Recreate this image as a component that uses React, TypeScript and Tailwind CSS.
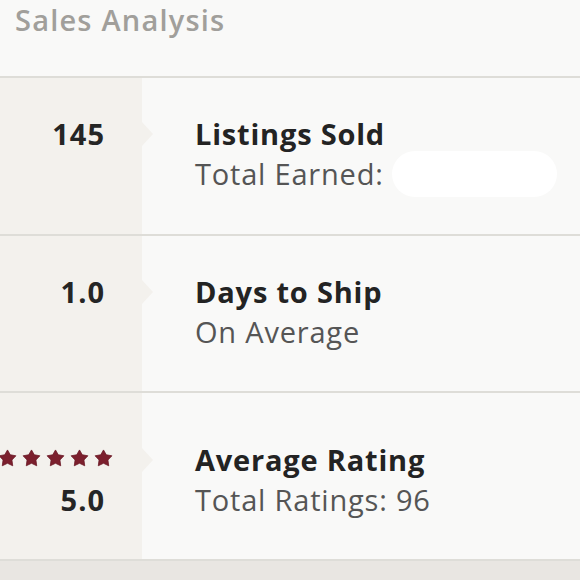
import React from "react";

const Star = () => (
  <svg width="19" height="19" viewBox="0 0 24 24" className="shrink-0">
    <path
      d="M12 1.2L15.5 7.3L22.6 8.6L17.6 13.9L18.6 21.2L12 18L5.4 21.2L6.4 13.9L1.4 8.6L8.5 7.3Z"
      fill="#7b1f2d"
      stroke="#6a1a26"
      strokeWidth="1"
      strokeLinejoin="round"
    />
  </svg>
);

type Row = {
  h: string;
  off: string;
  left: React.ReactNode;
  leftBottom?: React.ReactNode;
  title: string;
  sub: React.ReactNode;
};

export default function App() {
  const rows: Row[] = [
    {
      h: "h-[158px]",
      off: "-mt-[4px]",
      left: <span>145</span>,
      title: "Listings Sold",
      sub: (
        <span className="flex items-center">
          Total Earned:
          <span className="ml-[8px] inline-block w-[165px] h-[46px] rounded-full bg-white" />
        </span>
      ),
    },
    {
      h: "h-[157px]",
      off: "-mt-[4px]",
      left: <span>1.0</span>,
      title: "Days to Ship",
      sub: "On Average",
    },
    {
      h: "h-[168px]",
      off: "mt-[8px]",
      left: (
        <span className="flex gap-[5px] -mr-[8px] -mt-[4px]">
          <Star />
          <Star />
          <Star />
          <Star />
          <Star />
        </span>
      ),
      leftBottom: <span>5.0</span>,
      title: "Average Rating",
      sub: "Total Ratings: 96",
    },
  ];

  return (
    <div
      className="w-[580px] h-[580px] overflow-hidden bg-[#f9f9f8] flex flex-col"
      style={{ fontFamily: "'Open Sans', Lato, sans-serif" }}
    >
      <div className="h-[76px] shrink-0 px-[15px] pt-[1px]">
        <div className="text-[29px] leading-[38px] font-semibold text-[#a19f9b] tracking-[1.2px]">
          Sales Analysis
        </div>
      </div>
      {rows.map((r, i) => (
        <div
          key={i}
          className={`${r.h} shrink-0 flex border-t-2 border-[#deddd8]`}
        >
          <div className="w-[142px] shrink-0 bg-[#f3f1ed] flex items-center justify-end pr-[37px]">
            <div
              className={`${r.off} flex flex-col items-end text-[29px] font-bold text-[#252525] tracking-[1px]`}
            >
              <div className="h-[40px] flex items-center">{r.left}</div>
              <div className="h-[40px] flex items-center">{r.leftBottom}</div>
            </div>
          </div>
          <div className="flex-1 flex items-center pl-[53px]">
            <div className={`${r.off} relative`}>
              <div className="absolute -left-[53px] top-[8px] w-0 h-0 border-y-[12px] border-y-transparent border-l-[11px] border-l-[#f3f1ed]" />
              <div className="h-[40px] flex items-center text-[29px] font-bold text-[#232323] tracking-[0.8px]">
                {r.title}
              </div>
              <div className="h-[40px] flex items-center text-[29px] text-[#555555] tracking-[0.8px]">
                {r.sub}
              </div>
            </div>
          </div>
        </div>
      ))}
      <div className="flex-1 border-t-2 border-[#deddd8] bg-[#e9e6e2]" />
    </div>
  );
}
